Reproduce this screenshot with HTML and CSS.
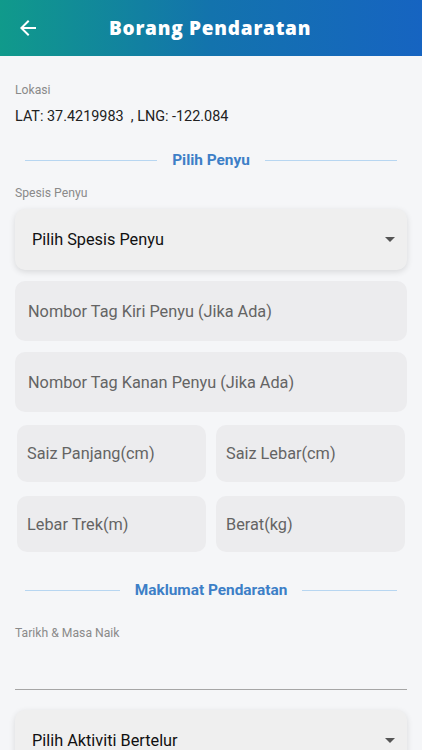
FILE: index.html
```html
<!DOCTYPE html>
<html lang="ms">
<head>
    <meta charset="UTF-8">
    <meta name="viewport" content="width=device-width, initial-scale=1.0">
    <title>Borang Pendaratan</title>
    <link rel="stylesheet" href="styles.css">
</head>
<body>
    <header class="appbar">
        <button class="back" aria-label="Kembali">
            <svg width="24" height="24" viewBox="0 0 24 24">
                <path d="M20 11H7.83l5.59-5.59L12 4l-8 8 8 8 1.41-1.41L7.83 13H20v-2z" fill="#fff"/>
            </svg>
        </button>
        <h1 class="title">Borang Pendaratan</h1>
    </header>

    <main class="form">
        <div class="label">Lokasi</div>
        <div class="coords">LAT: 37.4219983&nbsp; , LNG: -122.084</div>

        <div class="section">
            <span class="line"></span>
            <span class="section-name">Pilih Penyu</span>
            <span class="line"></span>
        </div>

        <div class="label">Spesis Penyu</div>
        <div class="select">
            <span>Pilih Spesis Penyu</span>
            <span class="caret"></span>
        </div>

        <div class="field">Nombor Tag Kiri Penyu (Jika Ada)</div>
        <div class="field">Nombor Tag Kanan Penyu (Jika Ada)</div>

        <div class="pair">
            <div class="field small">Saiz Panjang(cm)</div>
            <div class="field small">Saiz Lebar(cm)</div>
        </div>
        <div class="pair">
            <div class="field small">Lebar Trek(m)</div>
            <div class="field small">Berat(kg)</div>
        </div>

        <div class="section section-2">
            <span class="line"></span>
            <span class="section-name">Maklumat Pendaratan</span>
            <span class="line"></span>
        </div>

        <div class="label">Tarikh &amp; Masa Naik</div>
        <div class="underline"></div>

        <div class="select">
            <span>Pilih Aktiviti Bertelur</span>
            <span class="caret"></span>
        </div>
    </main>
</body>
</html>
```

FILE: styles.css
```css
body {
    margin: 0;
    background: #f5f6f8;
    font-family: Roboto, "Liberation Sans", sans-serif;
    color: #212121;
}

.appbar {
    height: 56px;
    display: flex;
    align-items: center;
    background: linear-gradient(90deg, #109a8b 0%, #1373ad 50%, #1664c1 100%);
}

.back {
    width: 56px;
    height: 56px;
    border: 0;
    background: none;
    padding: 0 0 0 16px;
    display: flex;
    align-items: center;
}

.title {
    margin: 0 0 0 53px;
    color: #fff;
    font-family: "Open Sans", sans-serif;
    font-weight: 800;
    font-size: 19px;
    letter-spacing: 0.75px;
}

.form {
    padding: 26px 15px 0;
}

.label {
    font-size: 12.2px;
    color: #8a8a8a;
    line-height: 16px;
}

.coords {
    font-size: 14.4px;
    margin-top: 10px;
    line-height: 18px;
}

.section {
    display: flex;
    align-items: center;
    gap: 15px;
    margin: 25px 10px 16px;
}

.line {
    flex: 1;
    height: 1px;
    background: #b7d6f1;
}

.section-name {
    color: #3d7fc7;
    font-weight: bold;
    font-size: 15.4px;
    line-height: 18px;
}

.section-2 {
    margin: 29px 10px 26px;
}

.select {
    margin-top: 8px;
    height: 61px;
    border-radius: 10px;
    background: #efefef;
    box-shadow: 0 2px 6px rgba(0, 0, 0, 0.12);
    display: flex;
    align-items: center;
    justify-content: space-between;
    padding: 0 12px 0 17px;
    font-size: 16.3px;
    color: #111;
}

.caret {
    width: 0;
    height: 0;
    border-left: 5px solid transparent;
    border-right: 5px solid transparent;
    border-top: 5px solid #555;
}

.field {
    margin-top: 11px;
    height: 60px;
    border-radius: 10px;
    background: #ececee;
    display: flex;
    align-items: center;
    padding-left: 13px;
    font-size: 16.3px;
    color: #646464;
}

.pair {
    display: flex;
    gap: 10px;
    margin: 13px 2px 0;
}

.pair .field {
    height: 57px;
}

.pair + .pair {
    margin-top: 14px;
}

.pair + .pair .field {
    height: 56px;
}

.field.small {
    flex: 1;
    margin-top: 0;
    padding-left: 10px;
}

.underline {
    margin-top: 48px;
    height: 1px;
    background: #a6a6a6;
}

.underline + .select {
    margin-top: 20px;
}
```
